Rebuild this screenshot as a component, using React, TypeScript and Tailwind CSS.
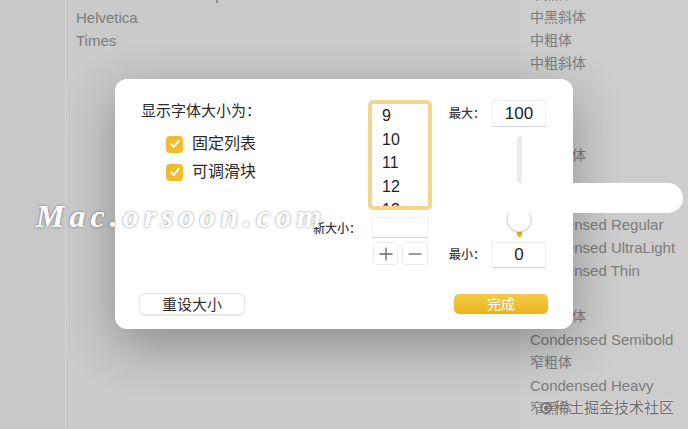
import React from "react";

const SANS = "font-['Liberation_Sans','Noto_Sans_CJK_SC',sans-serif]";

const middleItems = ["Helvetica Neue Group", "Helvetica", "Times"];
const rightItems = [
    "中黑体",
    "中黑斜体",
    "中粗体",
    "中粗斜体",
    "粗体",
    "粗斜体",
    "特粗体",
    "特粗斜体",
    "",
    "",
    "Condensed Regular",
    "Condensed UltraLight",
    "Condensed Thin",
    "窄细体",
    "窄中黑体",
    "Condensed Semibold",
    "窄粗体",
    "Condensed Heavy",
    "窄黑体",
];

const sizes = ["9", "10", "11", "12", "13", "14"];

const isCjk = (t: string) => /[\u4e00-\u9fff]/.test(t);

const Check = () => (
    <div className="w-[17px] h-[17px] rounded-[4px] bg-[#f2bb2c] flex items-center justify-center shrink-0">
        <svg width="12" height="12" viewBox="0 0 12 12">
            <path d="M2.2 6.4 L4.8 9 L9.8 2.8" fill="none" stroke="white" strokeWidth="1.9" strokeLinecap="round" strokeLinejoin="round" />
        </svg>
    </div>
);

const NumBox = ({ label, value, h }: { label: string; value: string; h: string }) => (
    <div className="flex items-center">
        <span className="w-[43px] text-[12px] font-medium text-[#3a3a3a]">{label}</span>
        <div className={`w-[54px] ${h} bg-white border border-[#f0f0f0] border-b-[#d6d6d6] flex items-center justify-center text-[17px] text-[#222]`}>
            {value}
        </div>
    </div>
);

const Dialog = () => (
    <div className={`absolute left-[115px] top-[79px] w-[458px] h-[250px] rounded-[12px] bg-white shadow-[0_16px_50px_rgba(0,0,0,0.3)] flex flex-col pl-[24px] pr-[25px] pt-[21px] ${SANS}`}>
        <div className="flex h-[168px]">
            {/* options */}
            <div className="w-[229px] flex flex-col">
                <div className="pl-[2px] text-[15px] leading-[22px] text-[#2a2a2a]">显示字体大小为：</div>
                <div className="mt-[8px] pl-[27px] flex flex-col">
                    <div className="h-[28px] flex items-center gap-[9px] text-[16px] text-[#2a2a2a]">
                        <Check />
                        <span>固定列表</span>
                    </div>
                    <div className="h-[28px] flex items-center gap-[9px] text-[16px] text-[#2a2a2a]">
                        <Check />
                        <span>可调滑块</span>
                    </div>
                </div>
                <div className="mt-[33px] pr-[7px] text-right text-[12px] font-medium leading-[20px] text-[#3a3a3a]">新大小：</div>
            </div>

            {/* size list */}
            <div className="w-[64px] flex flex-col">
                <div className="h-[110px] border-[4px] border-[#f5d58e] rounded-[5px] bg-white overflow-hidden">
                    {sizes.map((s) => (
                        <div key={s} className="pl-[10px] text-[16px] leading-[23.5px] text-[#1f1f1f]">{s}</div>
                    ))}
                </div>
                <div className="mt-[7px] ml-[4px] w-[56px] h-[21px] bg-white border border-[#f2f2f2] border-b-[#d3d3d3]"></div>
                <div className="mt-[4px] ml-[5px] flex gap-[4px]">
                    <div className="w-[25px] h-[23px] rounded-[4px] border border-[#ececec] flex items-center justify-center">
                        <svg width="14" height="14" viewBox="0 0 14 14">
                            <path d="M7 0.5 V13.5 M0.5 7 H13.5" stroke="#666" strokeWidth="1.3" />
                        </svg>
                    </div>
                    <div className="w-[26px] h-[23px] rounded-[4px] border border-[#ececec] flex items-center justify-center">
                        <svg width="14" height="14" viewBox="0 0 14 14">
                            <path d="M0.5 7 H13.5" stroke="#666" strokeWidth="1.3" />
                        </svg>
                    </div>
                </div>
            </div>

            {/* min / max + slider */}
            <div className="ml-[17px] w-[97px] flex flex-col">
                <NumBox label="最大：" value="100" h="h-[27px]" />
                <div className="ml-[43px] w-[54px] flex justify-center">
                    <div className="relative mt-[9px] mb-[5px] w-[5px] h-[101px] rounded-full bg-[#ebebeb]">
                        <div className="absolute bottom-0 left-0 w-[5px] h-[12px] rounded-full bg-[#edb516]"></div>
                        <div className="absolute top-[71px] left-1/2 -translate-x-1/2 w-[25px] h-[25px] rounded-full bg-white border border-[#d9d9d9] shadow-[0_1px_2px_rgba(0,0,0,0.15)]"></div>
                    </div>
                </div>
                <NumBox label="最小：" value="0" h="h-[26px]" />
            </div>
        </div>

        <div className="mt-[25px] flex items-center justify-between">
            <button className="w-[106px] h-[22px] rounded-[6px] bg-white border border-[#e2e2e2] shadow-[0_1px_1px_rgba(0,0,0,0.08)] text-[15px] leading-none text-[#333]">
                重设大小
            </button>
            <button className="w-[94px] h-[20px] rounded-[5px] bg-gradient-to-b from-[#f5ca45] to-[#e9b31c] text-[14px] leading-none text-white">
                完成
            </button>
        </div>
    </div>
);

export default function App() {
    return (
        <div className={`relative w-[688px] h-[429px] overflow-hidden bg-[#c9c9c9] ${SANS}`}>
            <div className="flex h-full">
                <div className="w-[65px] h-full bg-[#c8c8c8]"></div>
                <div className="w-[455px] h-full border-l border-[#d3d3d3] bg-[#cacaca] pl-[10px]">
                    <div className="mt-[-17px] flex flex-col">
                        {middleItems.map((t) => (
                            <div key={t} className="text-[15px] leading-[23px] text-[#7c7c7c]">{t}</div>
                        ))}
                    </div>
                </div>
                <div className="flex-1 h-full bg-[#cdcdcd] pl-[10px]">
                    <div className="mt-[-17px] flex flex-col">
                        {rightItems.map((t, i) => (
                            <div
                                key={i}
                                className={`h-[23px] leading-[23px] text-[#7c7c7c] whitespace-nowrap ${isCjk(t) ? "text-[14px]" : "text-[15px]"}`}
                            >
                                {t}
                            </div>
                        ))}
                    </div>
                </div>
            </div>

            <Dialog />

            {/* blotted-out watermark */}
            <div className="absolute left-[462px] top-[183px] w-[221px] h-[30px] rounded-full bg-white"></div>

            <div className="absolute left-[36px] top-[192px] font-['Liberation_Serif',serif] text-[32px] font-bold italic tracking-[5px] text-white [text-shadow:0_0_3px_rgba(0,0,0,0.45)]">
                Mac.orsoon.com
            </div>

            <div className="absolute left-[540px] top-[397px] flex items-center gap-[2px] text-[15px] leading-[22px] text-[#6a6a6a] [text-shadow:0_0_2px_rgba(255,255,255,0.9)]">
                <svg width="12" height="12" viewBox="0 0 12 12">
                    <circle cx="6" cy="6" r="5" fill="none" stroke="#6a6a6a" strokeWidth="1.4" />
                    <circle cx="6" cy="6" r="2" fill="#6a6a6a" />
                </svg>
                <span>稀土掘金技术社区</span>
            </div>
        </div>
    );
}
